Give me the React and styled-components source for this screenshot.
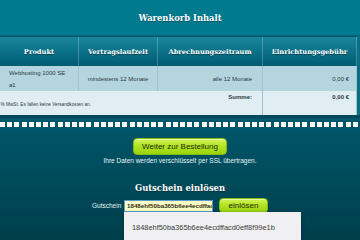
import React from 'react';
import styled, { createGlobalStyle } from 'styled-components';

const GlobalStyle = createGlobalStyle`
  html, body {
    margin: 0;
    padding: 0;
  }
  body {
    width: 360px;
    height: 240px;
    overflow: hidden;
    background: #005a6c;
    font-family: "Liberation Sans", Arial, sans-serif;
  }
`;

const columns = '79px 79px 105px 94px';

const Page = styled.div`
  display: flex;
  flex-direction: column;
  width: 360px;
  height: 240px;
  background: linear-gradient(#006175 0%, #005466 55%, #003f4c 100%);
`;

const TitleBar = styled.div`
  height: 35px;
  display: flex;
  align-items: center;
  justify-content: center;
  background: #007a8f;
  border-bottom: 1px solid #00647a;
  color: #fff;
  font-family: "DejaVu Serif", "Liberation Serif", serif;
  font-weight: bold;
  font-size: 8.4px;
  text-shadow: 0 1px 1px rgba(0, 0, 0, 0.35);
`;

const TableWrap = styled.div`
  display: flex;
  flex-direction: column;
  padding-right: 3px;
  background: #0b6f84;
`;

const Row = styled.div`
  display: grid;
  grid-template-columns: ${props => props.$cols || columns};
  height: ${props => props.$height}px;
  background: ${props => props.$bg};
`;

const HeaderRow = styled(Row)`
  background: linear-gradient(#1a869b 0%, #0b7188 50%, #005c72 100%);
  border-top: 1px solid #005467;
`;

const HeadCell = styled.div`
  display: flex;
  align-items: center;
  justify-content: center;
  border-right: 1px solid rgba(255, 255, 255, 0.22);
  color: #fff;
  font-family: "DejaVu Serif", "Liberation Serif", serif;
  font-weight: bold;
  font-size: 6.7px;
  text-shadow: 0 1px 1px rgba(0, 0, 0, 0.4);
  white-space: nowrap;
`;

const Cell = styled.div`
  display: flex;
  flex-direction: column;
  justify-content: ${props => props.$valign || 'center'};
  align-items: ${props => props.$align || 'center'};
  padding: 0 ${props => props.$pad || 0}px;
  border-right: 1px solid #9ec4d2;
  color: #2a3a40;
  font-size: 6px;
  line-height: 12px;
  white-space: nowrap;
`;

const SumText = styled.div`
  align-self: flex-end;
  padding-right: 10px;
  font-weight: bold;
  line-height: 8px;
  margin-top: 2px;
`;

const NoteLine = styled.div`
  width: 91px;
  display: flex;
  justify-content: flex-end;
  overflow: hidden;
  line-height: 7px;
  font-size: 4.7px;
`;

const BoldValue = styled.div`
  font-weight: bold;
  line-height: 8px;
  margin-top: 2px;
`;

const DarkLine = styled.div`
  height: 3px;
  background: #00485a;
`;

const Dots = styled.div`
  height: 13px;
  padding-top: 4px;
  box-sizing: border-box;
  background: #00566a;

  &::after {
    content: '';
    display: block;
    height: 5px;
    background: repeating-linear-gradient(90deg, #fff 0 5px, transparent 5px 7.2px);
  }
`;

const Content = styled.div`
  display: flex;
  flex-direction: column;
  align-items: center;
`;

const GreenButton = styled.button`
  height: ${props => props.$h}px;
  width: ${props => props.$w}px;
  padding: 0;
  border: 1px solid #84bb10;
  border-radius: 4px;
  background: linear-gradient(#d2f55a 0%, #b3e425 45%, #9bd40e 100%);
  color: #1d2a05;
  font-family: "Liberation Sans", Arial, sans-serif;
  font-size: 8px;
  box-shadow: inset 0 1px 0 rgba(255, 255, 255, 0.5);
`;

const Primary = styled(GreenButton)`
  margin-top: 7px;
`;

const SslText = styled.div`
  color: #e6f2f5;
  font-size: 6.5px;
  line-height: 9px;
  margin-top: 1px;
`;

const Heading = styled.div`
  margin-top: 17px;
  color: #fff;
  font-family: "DejaVu Serif", "Liberation Serif", serif;
  font-size: 8.4px;
  font-weight: 600;
  line-height: 12px;
  text-shadow: 0 1px 1px rgba(0, 0, 0, 0.35);
`;

const CouponRow = styled.div`
  margin-top: 4px;
  display: flex;
  align-items: center;
  height: 15px;
`;

const Label = styled.span`
  color: #e6f2f5;
  font-size: 6.5px;
  width: 29px;
  margin-right: 3px;
  white-space: nowrap;
`;

const InputWrap = styled.div`
  position: relative;
  margin-right: 6px;
`;

const CouponInput = styled.div`
  width: 89px;
  height: 12px;
  box-sizing: border-box;
  border: 1px solid #5a9ccc;
  background: #ffffc6;
  color: #2a2a10;
  font-size: 6.2px;
  font-weight: bold;
  line-height: 10px;
  padding-left: 2px;
  overflow: hidden;
  white-space: nowrap;
`;

const Suggest = styled.div`
  position: absolute;
  top: 12px;
  left: 0;
  width: 177px;
  height: 36px;
  box-sizing: border-box;
  padding: 11px 0 0 8px;
  background: #f0f0f2;
  box-shadow: 0 1px 4px rgba(0, 0, 0, 0.35);
  color: #3a3a3a;
  font-size: 7.4px;
  line-height: 10px;
  white-space: nowrap;
`;

export default function App() {
  const code = '1848ehf50ba365b6ee4ecdffacd0eff8f99e1b';
  return (
    <Page>
      <GlobalStyle />
      <TitleBar>Warenkorb Inhalt</TitleBar>
      <TableWrap>
        <HeaderRow $height={29}>
          <HeadCell>Produkt</HeadCell>
          <HeadCell>Vertragslaufzeit</HeadCell>
          <HeadCell>Abrechnungszeitraum</HeadCell>
          <HeadCell>Einrichtungsgebühr</HeadCell>
        </HeaderRow>
        <Row $height={25} $bg="#b4d4e0">
          <Cell $align="flex-start" $pad={9}>
            <span>Webhosting 1000 SE</span>
            <span>a1</span>
          </Cell>
          <Cell>mindestens 12 Monate</Cell>
          <Cell $align="flex-end" $pad={10}>alle 12 Monate</Cell>
          <Cell $align="flex-end" $pad={7}>0,00 €</Cell>
        </Row>
        <Row $height={24} $bg="#e0eef3" $cols="263px 94px">
          <Cell $align="flex-start" $valign="flex-start">
            <SumText>Summe:</SumText>
            <NoteLine>Alle Preise inkl. 19 % MwSt. Es fallen keine Versandkosten an.</NoteLine>
          </Cell>
          <Cell $align="flex-end" $valign="flex-start" $pad={7}>
            <BoldValue>0,00 €</BoldValue>
          </Cell>
        </Row>
      </TableWrap>
      <DarkLine />
      <Dots />
      <Content>
        <Primary $w={94} $h={17}>Weiter zur Bestellung</Primary>
        <SslText>Ihre Daten werden verschlüsselt per SSL übertragen.</SslText>
        <Heading>Gutschein einlösen</Heading>
        <CouponRow>
          <Label>Gutschein</Label>
          <InputWrap>
            <CouponInput>{code}</CouponInput>
            <Suggest>{code}</Suggest>
          </InputWrap>
          <GreenButton $w={49} $h={15}>einlösen</GreenButton>
        </CouponRow>
      </Content>
    </Page>
  );
}
